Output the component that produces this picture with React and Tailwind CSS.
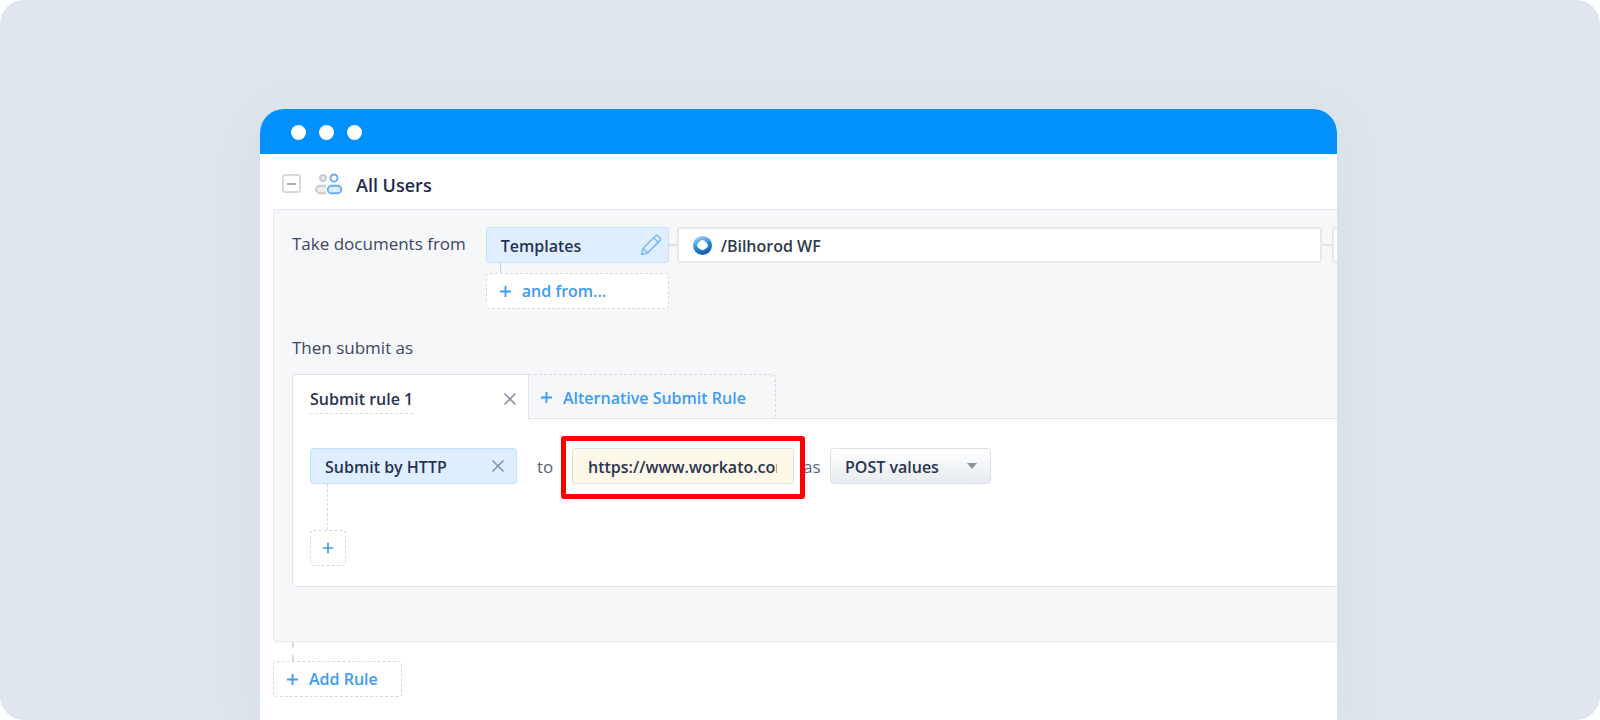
const Plus = ({ className }) => (
  <svg viewBox="0 0 14 14" className={className} fill="none" stroke="#3d9bf5" strokeWidth="2">
    <path d="M7 1v12M1 7h12" />
  </svg>
);

const Cross = () => (
  <svg viewBox="0 0 14 14" className="w-[14px] h-[14px]" fill="none" stroke="#8a93a3" strokeWidth="1.6">
    <path d="M1.5 1.5l11 11M12.5 1.5l-11 11" />
  </svg>
);

const Pencil = () => (
  <svg viewBox="0 0 22 22" className="w-[22px] h-[22px]" fill="none" stroke="#7db9f5" strokeWidth="1.5" strokeLinejoin="round">
    <path d="M1.5 20.5l1.6-6.2L15.6 1.8a1.6 1.6 0 0 1 2.2 0l2.400 2.400a1.6 1.6 0 0 1 0 2.2L7.7 18.900z" />
    <path d="M3.100 14.300l4.600 4.600M13.600 3.800l4.600 4.600" />
  </svg>
);

const Users = () => (
  <svg viewBox="0 0 27 22" className="w-[27px] h-[22px]" fill="none" strokeWidth="1.9">
    <circle cx="8" cy="5" r="3" stroke="#c6cacf" fill="#e6e8eb" />
    <path d="M11 12.700H5a3.800 3.800 0 0 0 0 7.600h6" stroke="#c6cacf" fill="#eceef0" />
    <circle cx="19" cy="5" r="3.500" stroke="#69aef2" />
    <rect x="12.700" y="12.700" width="13.600" height="7.600" rx="3.800" stroke="#69aef2" fill="#dcecfd" />
  </svg>
);

const Logo = () => (
  <svg viewBox="0 0 21 21" className="w-[21px] h-[21px]">
    <defs>
      <linearGradient id="lg" x1="0.25" y1="0" x2="0.65" y2="1">
        <stop offset="0" stopColor="#a6d6f5" />
        <stop offset="0.45" stopColor="#2f93e0" />
        <stop offset="1" stopColor="#0b5a9e" />
      </linearGradient>
    </defs>
    <path
      fillRule="evenodd"
      fill="url(#lg)"
      d="M10.500 1a9.500 9.500 0 1 1 0 19a9.500 9.500 0 0 1 0-19zM10.500 5c-2 0-5.500 3.500-5.500 5.500s3.500 4.500 5.500 4.500s5.500-2.500 5.500-4.500s-3.500-5.500-5.500-5.500z"
    />
  </svg>
);

export default function App() {
  return (
    <div
      className="w-[1600px] h-[720px] overflow-hidden bg-white"
      style={{ fontFamily: '"Open Sans", "Noto Sans", sans-serif' }}
    >
      <div className="w-full h-full rounded-[24px] bg-[#dfe6ed] pt-[109px] pl-[260px] overflow-hidden">
        <div className="w-[1077px] h-[611px] rounded-t-[24px] overflow-hidden bg-white shadow-[0_10px_60px_rgba(150,165,185,0.14)] flex flex-col">
          {/* Title bar */}
          <div className="h-[45px] shrink-0 bg-[#0091ff] flex items-center gap-[13px] pl-[31px] pt-[2px]">
            <span className="w-[15px] h-[15px] rounded-full bg-white" />
            <span className="w-[15px] h-[15px] rounded-full bg-white" />
            <span className="w-[15px] h-[15px] rounded-full bg-white" />
          </div>

          {/* Group header */}
          <div className="h-[55px] shrink-0 flex items-center pl-[22px] pt-[4px]">
            <span className="w-[19px] h-[19px] rounded-[3px] border-2 border-[#d7dade] flex items-center justify-center">
              <span className="w-[9px] h-[2px] bg-[#a9afb8]" />
            </span>
            <span className="ml-[14px] flex"><Users /></span>
            <span className="ml-[14px] mt-[2px] text-[18px] font-semibold text-[#1f2a4d] leading-none">All Users</span>
          </div>

          {/* Gray rule panel */}
          <div className="ml-[13px] w-[1100px] h-[433px] shrink-0 rounded-[4px] border border-[#e3e7ee] bg-[#f6f7f9] pl-[18px] pt-[17px]">
            <div className="flex items-start">
              <span className="w-[194px] text-[17px] text-[#3d4663] leading-[34px] whitespace-nowrap">Take documents from</span>
              <div className="flex flex-col w-[183px]">
                <div className="h-[36px] rounded-[3px] border border-[#c4e1fe] bg-[#dfefff] flex items-center justify-between pl-[14px] pr-[6px]">
                  <span className="mt-[1px] text-[16px] font-semibold text-[#2a3350]">Templates</span>
                  <Pencil />
                </div>
                <div className="ml-[14px] h-[10px] border-l border-dashed border-[#c6ccd6]" />
                <div className="h-[36px] rounded-[4px] border border-dashed border-[#d5dae3] bg-white flex items-center pl-[12px] gap-[10px]">
                  <Plus className="w-[13px] h-[13px]" />
                  <span className="text-[16px] font-semibold text-[#3d9bf5]">and from...</span>
                </div>
              </div>
              <div className="w-[8px] h-[2px] mt-[17px] bg-[#dfe3e8]" />
              <div className="w-[646px] h-[36px] rounded-[3px] border-2 border-[#e6e9ec] bg-white flex items-center pl-[13px] gap-[8px]">
                <Logo />
                <span className="mt-[1px] text-[16px] font-semibold text-[#2e3a4e]">/Bilhorod WF</span>
              </div>
              <div className="w-[10px] h-[2px] mt-[17px] bg-[#dfe3e8]" />
              <div className="w-[40px] h-[36px] rounded-[3px] border-2 border-[#e6e9ec] bg-white" />
            </div>

            <div className="mt-[22px] text-[17px] text-[#3d4663] leading-[34px]">Then submit as</div>

            {/* Rule card */}
            <div className="mt-[9px] h-[213px] w-[1060px] flex flex-col">
              <div className="h-[45px] shrink-0 flex">
                <div className="relative z-10 w-[237px] h-[45px] rounded-tl-[4px] border-l border-t border-r border-[#dfe4ec] bg-white flex items-start justify-between pl-[17px] pr-[11px]">
                  <span className="mt-[14px] pb-[3px] h-[25px] leading-[20px] text-[16px] font-semibold text-[#2a3350] border-b border-dashed border-[#d5dae3]">Submit rule 1</span>
                  <span className="mt-[17px] flex"><Cross /></span>
                </div>
                <div className="w-[247px] h-[44px] rounded-tr-[4px] border-t border-r border-dashed border-[#d5dae3] flex items-center pl-[11px] gap-[10px] pt-[2px]">
                  <Plus className="w-[13px] h-[13px]" />
                  <span className="text-[16px] font-semibold text-[#3d9bf5]">Alternative Submit Rule</span>
                </div>
              </div>
              <div className="-mt-px flex-1 rounded-bl-[4px] border border-[#dfe4ec] bg-white pl-[17px] pt-[29px]">
                <div className="flex items-center h-[36px]">
                  <div className="w-[207px] h-[36px] rounded-[3px] border border-[#c4e1fe] bg-[#dfefff] flex items-center justify-between pl-[14px] pr-[11px]">
                    <span className="mt-[2px] text-[16px] font-semibold text-[#2a3350]">Submit by HTTP</span>
                    <Cross />
                  </div>
                  <span className="ml-[20px] mt-[2px] w-[35px] text-[17px] text-[#5a6379]">to</span>
                  <div className="relative w-[222px] h-[36px]">
                    <div className="w-full h-full overflow-hidden rounded-[3px] border border-[#dfe2e0] bg-[#fdf8e7] pl-[15px] pr-[16px] flex items-center">
                      <span className="block mt-[2px] w-full overflow-hidden whitespace-nowrap text-[16px] font-semibold text-[#2a3350]">https://www.workato.com</span>
                    </div>
                  </div>
                  <span className="ml-[9px] mt-[2px] w-[27px] text-[17px] text-[#5a6379]">as</span>
                  <div className="w-[161px] h-[36px] rounded-[4px] border border-[#dbe1e8] bg-gradient-to-b from-white to-[#e7ebf0] flex items-center justify-between pl-[14px] pr-[13px]">
                    <span className="mt-[2px] text-[16px] font-semibold text-[#2a3350]">POST values</span>
                    <span className="w-0 h-0 border-l-[5px] border-r-[5px] border-t-[6px] border-l-transparent border-r-transparent border-t-[#8b93a1]" />
                  </div>
                </div>
                <div className="ml-[17px] h-[46px] border-l border-dashed border-[#d5dae3]" />
                <div className="w-[36px] h-[36px] rounded-[4px] border border-dashed border-[#d5dae3] bg-white flex items-center justify-center">
                  <Plus className="w-[12px] h-[12px]" />
                </div>
              </div>
            </div>
          </div>

          {/* Add rule */}
          <div className="ml-[32px] h-[19px] w-0 shrink-0 border-l-2 border-dashed border-[#d5dae3]" />
          <div className="ml-[13px] w-[129px] h-[36px] shrink-0 rounded-[4px] border border-dashed border-[#d5dae3] flex items-center pl-[12px] gap-[10px]">
            <Plus className="w-[13px] h-[13px]" />
            <span className="text-[16px] font-semibold text-[#3d9bf5]">Add Rule</span>
          </div>
        </div>
      </div>
      {/* Red highlight frame over the URL field */}
      <div className="absolute left-[561px] top-[436px] w-[244px] h-[63px] rounded-[3px] border-[5px] border-[#ff0000]" />
    </div>
  );
}
